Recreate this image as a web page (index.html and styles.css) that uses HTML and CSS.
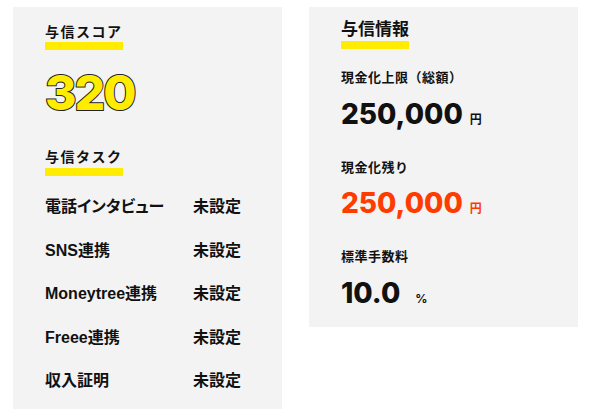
FILE: index.html
```html
<!DOCTYPE html>
<html lang="ja">

<head>
    <meta charset="UTF-8">
    <meta name="viewport" content="width=device-width, initial-scale=1.0">
    <title>与信</title>
    <link rel="stylesheet" href="styles.css">
</head>

<body>
    <div class="board">
        <section class="panel panel_score">
            <h2 class="title">与信スコア</h2>
            <div class="score">320</div>

            <h2 class="title title_task">与信タスク</h2>
            <ul class="task_list">
                <li class="task"><span class="task_name">電話インタビュー</span><span class="task_state">未設定</span></li>
                <li class="task"><span class="task_name">SNS連携</span><span class="task_state">未設定</span></li>
                <li class="task"><span class="task_name">Moneytree連携</span><span class="task_state">未設定</span></li>
                <li class="task"><span class="task_name">Freee連携</span><span class="task_state">未設定</span></li>
                <li class="task"><span class="task_name">収入証明</span><span class="task_state">未設定</span></li>
            </ul>
        </section>

        <section class="panel panel_info">
            <h2 class="title title_info">与信情報</h2>

            <div class="info">
                <div class="info_label">現金化上限（総額）</div>
                <div class="info_value">250,000<span class="unit">円</span></div>
            </div>
            <div class="info">
                <div class="info_label">現金化残り</div>
                <div class="info_value info_value_rest">250,000<span class="unit">円</span></div>
            </div>
            <div class="info">
                <div class="info_label">標準手数料</div>
                <div class="info_value">10.0<span class="unit unit_percent">%</span></div>
            </div>
        </section>
    </div>
</body>

</html>
```

FILE: styles.css
```css
* {
    margin: 0;
    padding: 0;
    box-sizing: border-box;
}

body {
    font-family: "Liberation Sans", "Noto Sans CJK JP", sans-serif;
    font-weight: 700;
    color: #111;
    background: #fff;
}

.board {
    display: flex;
    align-items: flex-start;
    gap: 27px;
    padding: 7px 0 0 13px;
}

.panel {
    width: 269px;
    background-color: #f3f3f3;
    padding-left: 32px;
}

.panel_score {
    height: 402px;
    padding-top: 16px;
}

.panel_info {
    height: 320px;
    padding-top: 13px;
}

.title {
    width: fit-content;
    font-size: 14px;
    line-height: 19px;
    letter-spacing: 1.5px;
    font-weight: 700;
    border-bottom: 8px solid #ffec00;
}

.title_task {
    margin-top: 27px;
    padding-bottom: 1px;
}

.title_info {
    font-size: 17px;
    line-height: 20px;
    letter-spacing: 0;
    padding-bottom: 1px;
}

.score {
    margin-top: 15px;
    font-family: Inter, sans-serif;
    font-weight: 800;
    font-size: 48px;
    line-height: 56px;
    letter-spacing: -2px;
    color: #ffec00;
    -webkit-text-stroke: 2px #222;
    paint-order: stroke fill;
}

.task_list {
    list-style: none;
    margin-top: 9px;
}

.task {
    display: flex;
    font-size: 16px;
    line-height: 43.5px;
    font-feature-settings: "palt";
}

.task_name {
    width: 148px;
}

.task_state {
    font-feature-settings: normal;
}

.info {
    margin-top: 28px;
}

.info:first-of-type {
    margin-top: 20px;
}

.info_label {
    font-size: 13px;
    line-height: 18px;
    letter-spacing: 0.5px;
}

.info_value {
    margin-top: 9.5px;
    font-family: Inter, sans-serif;
    font-weight: 800;
    font-size: 28px;
    line-height: 34px;
    color: #111;
}

.info_value_rest {
    color: #ff3c00;
}

.unit {
    margin-left: 7px;
    font-family: "Noto Sans CJK JP", sans-serif;
    font-size: 12px;
    font-weight: 700;
    line-height: 1;
}

.unit_percent {
    margin-left: 15px;
    font-family: Inter, sans-serif;
    font-size: 12px;
}
```
